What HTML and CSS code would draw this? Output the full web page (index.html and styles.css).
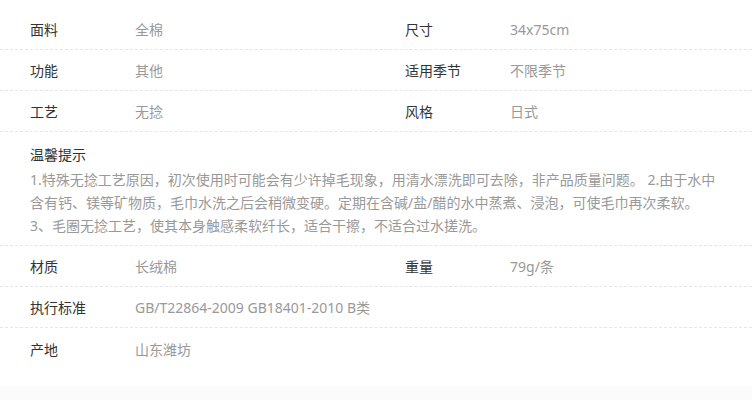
FILE: index.html
```html
<!DOCTYPE html>
<html lang="zh-CN">
<head>
  <meta charset="UTF-8">
  <meta name="viewport" content="width=device-width, initial-scale=1.0">
  <title>商品参数</title>
  <link rel="stylesheet" href="styles.css">
</head>
<body>
  <div class="params">
    <div class="param-row">
      <div class="param-cell"><span class="label">面料</span><span class="value">全棉</span></div>
      <div class="param-cell"><span class="label">尺寸</span><span class="value">34x75cm</span></div>
    </div>
    <div class="param-row">
      <div class="param-cell"><span class="label">功能</span><span class="value">其他</span></div>
      <div class="param-cell"><span class="label">适用季节</span><span class="value">不限季节</span></div>
    </div>
    <div class="param-row">
      <div class="param-cell"><span class="label">工艺</span><span class="value">无捻</span></div>
      <div class="param-cell"><span class="label">风格</span><span class="value">日式</span></div>
    </div>
    <div class="tips">
      <div class="tips-title">温馨提示</div>
      <p class="tips-text">1.特殊无捻工艺原因，初次使用时可能会有少许掉毛现象，用清水漂洗即可去除，非产品质量问题。 2.由于水中含有钙、镁等矿物质，毛巾水洗之后会稍微变硬。定期在含碱/盐/醋的水中蒸煮、浸泡，可使毛巾再次柔软。<br>3、毛圈无捻工艺，使其本身触感柔软纤长，适合干擦，不适合过水搓洗。</p>
    </div>
    <div class="param-row">
      <div class="param-cell"><span class="label">材质</span><span class="value">长绒棉</span></div>
      <div class="param-cell"><span class="label">重量</span><span class="value">79g/条</span></div>
    </div>
    <div class="param-row">
      <div class="param-cell wide"><span class="label">执行标准</span><span class="value">GB/T22864-2009 GB18401-2010 B类</span></div>
    </div>
    <div class="param-row last">
      <div class="param-cell wide"><span class="label">产地</span><span class="value">山东潍坊</span></div>
    </div>
  </div>
  <div class="footer-space"></div>
</body>
</html>
```

FILE: styles.css
```css
* {
  margin: 0;
  padding: 0;
  box-sizing: border-box;
}
body {
  font-family: "Noto Sans", "Noto Sans CJK SC", sans-serif;
  font-size: 14px;
  color: #333;
  background-color: #fbfbfb;
}
.params {
  background-color: #fff;
  padding-top: 9px;
  padding-bottom: 17px;
}
.param-row {
  display: flex;
  height: 41px;
  border-bottom: 1px dashed #e6e6e6;
}
.param-row.last {
  border-bottom: none;
}
.param-cell {
  width: 376px;
  display: flex;
  align-items: center;
  padding-left: 30px;
}
.param-cell.wide {
  width: 100%;
}
.param-cell:nth-child(2) {
  padding-left: 29px;
}
.label {
  width: 105px;
  flex-shrink: 0;
  color: #333;
}
.value {
  color: #999;
  white-space: nowrap;
}
.tips {
  padding: 12px 30px 8px;
  border-bottom: 1px dashed #e6e6e6;
}
.tips-title {
  line-height: 22px;
  color: #333;
  margin-bottom: 2px;
}
.tips-text {
  line-height: 23px;
  color: #999;
  padding-right: 6px;
}
.footer-space {
  height: 15px;
}
```
